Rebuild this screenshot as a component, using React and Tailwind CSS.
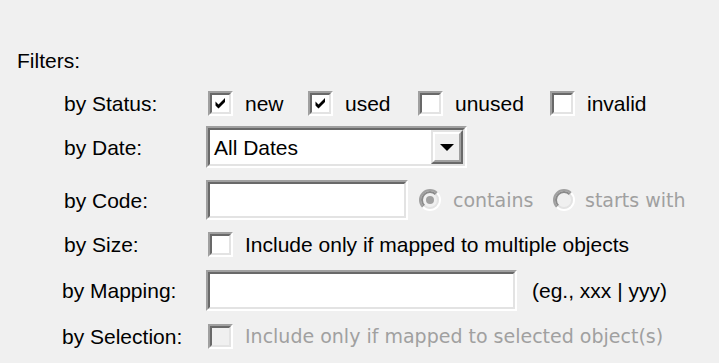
import React from "react";

const font = { fontFamily: '"Liberation Sans", Arial, sans-serif' };

function Sunken({ className = "", inner = "bg-white", children }) {
  return (
    <div className={`border-2 border-t-[#a0a0a0] border-l-[#a0a0a0] border-r-white border-b-white ${className}`}>
      <div className={`h-full w-full border-2 border-t-[#696969] border-l-[#696969] border-r-[#e3e3e3] border-b-[#e3e3e3] ${inner}`}>
        {children}
      </div>
    </div>
  );
}

function CheckBox({ checked, disabled }) {
  return (
    <Sunken className="h-[25px] w-[25px] shrink-0" inner={disabled ? "bg-[#f0f0f0]" : "bg-white"}>
      {checked && (
        <svg viewBox="0 0 17 17" className="h-full w-full">
          <polygon points="3.5,6.5 6.5,9.5 13,3 13,7 6.5,13.5 3.5,10.5" fill="#000" />
        </svg>
      )}
    </Sunken>
  );
}

function Radio({ checked }) {
  const arc = (r) => {
    const d = r / Math.SQRT2;
    return {
      tl: `M ${11 - d} ${11 + d} A ${r} ${r} 0 0 1 ${11 + d} ${11 - d}`,
      br: `M ${11 + d} ${11 - d} A ${r} ${r} 0 0 1 ${11 - d} ${11 + d}`,
    };
  };
  const o = arc(10);
  const i = arc(8);
  return (
    <svg width="22" height="22" viewBox="0 0 22 22" className="shrink-0">
      <circle cx="11" cy="11" r="8" fill="#f0f0f0" />
      <path d={o.tl} stroke="#a0a0a0" strokeWidth="2" fill="none" />
      <path d={o.br} stroke="#ffffff" strokeWidth="2" fill="none" />
      <path d={i.tl} stroke="#8a8a8a" strokeWidth="2" fill="none" />
      <path d={i.br} stroke="#e3e3e3" strokeWidth="2" fill="none" />
      {checked && <circle cx="11" cy="11" r="4" fill="#a0a0a0" />}
    </svg>
  );
}

function Label({ children, pl = "pl-[64px]" }) {
  return <div className={`w-[206px] shrink-0 ${pl}`}>{children}</div>;
}

const disabledText = "text-[19px] text-[#a0a0a0] [font-family:'DejaVu_Sans',Verdana,sans-serif]";

export default function App() {
  return (
    <div style={font} className="h-[363px] w-[719px] overflow-hidden bg-[#f0f0f0] pt-[40px] text-[21px] leading-none text-black">
      <div className="flex h-[40px] items-center pl-[17px]">Filters:</div>

      <div className="flex h-[46px] items-center">
        <Label>by Status:</Label>
        <div className="ml-[2px] flex items-center">
          <div className="flex w-[100px] items-center gap-[12px]">
            <CheckBox checked />
            <span>new</span>
          </div>
          <div className="flex w-[110px] items-center gap-[12px]">
            <CheckBox checked />
            <span>used</span>
          </div>
          <div className="flex w-[132px] items-center gap-[12px]">
            <CheckBox />
            <span>unused</span>
          </div>
          <div className="flex items-center gap-[12px]">
            <CheckBox />
            <span>invalid</span>
          </div>
        </div>
      </div>

      <div className="flex h-[42px] items-center">
        <Label>by Date:</Label>
        <Sunken className="h-[42px] w-[261px]" inner="bg-white flex items-center">
          <span className="flex-1 pl-[4px]">All Dates</span>
          <div className="h-full w-[32px] border-2 border-t-[#e3e3e3] border-l-[#e3e3e3] border-r-[#696969] border-b-[#696969]">
            <div className="flex h-full w-full items-center justify-center border-2 border-t-white border-l-white border-r-[#a0a0a0] border-b-[#a0a0a0] bg-[#f0f0f0]">
              <svg width="14" height="7" viewBox="0 0 14 7">
                <polygon points="0,0 14,0 7,7" fill="#000" />
              </svg>
            </div>
          </div>
        </Sunken>
      </div>

      <div className="mt-[12px] flex h-[40px] items-center">
        <Label>by Code:</Label>
        <Sunken className="h-[40px] w-[202px]" />
        <div className="ml-[11px] flex w-[134px] items-center gap-[12px]">
          <Radio checked />
          <span className={disabledText}>contains</span>
        </div>
        <div className="flex items-center gap-[10px]">
          <Radio />
          <span className={disabledText}>starts with</span>
        </div>
      </div>

      <div className="mt-[12px] flex h-[25px] items-center">
        <Label>by Size:</Label>
        <div className="ml-[2px] flex items-center gap-[12px]">
          <CheckBox />
          <span>Include only if mapped to multiple objects</span>
        </div>
      </div>

      <div className="mt-[13px] flex h-[41px] items-center">
        <Label pl="pl-[62px]">by Mapping:</Label>
        <Sunken className="h-[41px] w-[311px]" />
        <span className="ml-[15px]">(eg., xxx | yyy)</span>
      </div>

      <div className="mt-[13px] flex h-[25px] items-center">
        <Label pl="pl-[62px]">by Selection:</Label>
        <div className="ml-[2px] flex items-center gap-[12px]">
          <CheckBox disabled />
          <span className={disabledText}>Include only if mapped to selected object(s)</span>
        </div>
      </div>
    </div>
  );
}
